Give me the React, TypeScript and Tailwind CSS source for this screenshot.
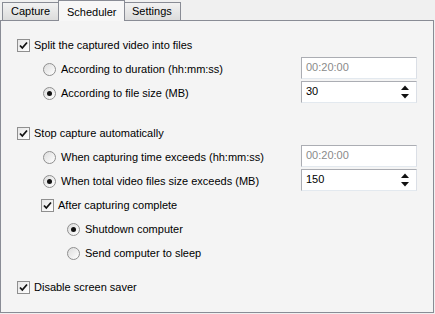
import type { ReactNode } from "react";

const font = { fontFamily: '"Liberation Sans", Arial, sans-serif' };

function CheckBox({ checked }: { checked: boolean }) {
  return (
    <span className="flex h-[13px] w-[13px] shrink-0 items-center justify-center border border-[#8f8f8f] bg-gradient-to-br from-[#e6e6e6] to-white">
      {checked && (
        <svg width="9" height="9" viewBox="0 0 9 9">
          <path d="M1 4.5 L3.3 7 L8 1.5" fill="none" stroke="#111" strokeWidth="1.8" />
        </svg>
      )}
    </span>
  );
}

function Radio({ checked }: { checked: boolean }) {
  return (
    <span className="flex h-[13px] w-[13px] shrink-0 items-center justify-center rounded-full border border-[#8f8f8f] bg-gradient-to-br from-[#dcdcdc] to-white">
      {checked && <span className="h-[5px] w-[5px] rounded-full bg-[#111]" />}
    </span>
  );
}

function Row({
  indent,
  gap,
  control,
  children,
  right,
}: {
  indent: string;
  gap: string;
  control: ReactNode;
  children: ReactNode;
  right?: ReactNode;
}) {
  return (
    <div className={`flex h-[24px] items-center ${indent}`}>
      <div className={`flex items-center ${gap}`}>
        {control}
        <span className="text-[11px] text-black">{children}</span>
      </div>
      {right && <div className="ml-auto mr-[16px] mb-[3px]">{right}</div>}
    </div>
  );
}

function TimeBox({ value }: { value: string }) {
  return (
    <div className="flex h-[22px] w-[116px] items-center border border-[#abadb3] border-b-[#e3e9ef] border-r-[#dbdfe6] bg-white pl-[4px] text-[11px] text-[#8a8a8a]">
      {value}
    </div>
  );
}

function SpinBox({ value }: { value: string }) {
  return (
    <div className="flex h-[22px] w-[116px] items-center border border-[#abadb3] border-b-[#e3e9ef] border-r-[#dbdfe6] bg-white pl-[4px] text-[11px] text-black">
      <span>{value}</span>
      <div className="ml-auto mr-[7px] flex flex-col items-center gap-[4px]">
        <svg width="8" height="5" viewBox="0 0 8 5">
          <path d="M0 5 L4 0.5 L8 5 Z" fill="#111" />
        </svg>
        <svg width="8" height="5" viewBox="0 0 8 5">
          <path d="M0 0 L8 0 L4 4.5 Z" fill="#111" />
        </svg>
      </div>
    </div>
  );
}

function Tab({ label, active }: { label: string; active?: boolean }) {
  if (active) {
    return (
      <div className="relative z-10 -mb-px -mx-[2px] flex h-[21px] w-[67px] items-start border border-b-0 border-[#898c95] bg-[#f7f7f7] pl-[8px] pt-[3px] text-[11px] text-black">
        {label}
      </div>
    );
  }
  return (
    <div className="flex h-[18px] w-[58px] items-center border border-b-0 border-[#898c95] bg-gradient-to-b from-[#f2f2f2] to-[#dcdcdc] pl-[8px] text-[11px] text-black">
      {label}
    </div>
  );
}

export default function App() {
  return (
    <div className="flex h-[314px] w-[435px] flex-col bg-[#f0f0f0]" style={font}>
      <div className="flex h-[20px] items-end pl-[2px]">
        <Tab label="Capture" />
        <Tab label="Scheduler" active />
        <Tab label="Settings" />
      </div>
      <div className="mb-[1px] mr-[1px] flex flex-1 flex-col border border-[#898c95] bg-[#f4f4f4] pt-[12px]">
        <Row indent="pl-[16px]" gap="gap-[4px]" control={<CheckBox checked />}>
          Split the captured video into files
        </Row>
        <Row
          indent="pl-[42px]"
          gap="gap-[5px]"
          control={<Radio checked={false} />}
          right={<TimeBox value="00:20:00" />}
        >
          According to duration (hh:mm:ss)
        </Row>
        <Row
          indent="pl-[42px]"
          gap="gap-[5px]"
          control={<Radio checked />}
          right={<SpinBox value="30" />}
        >
          According to file size (MB)
        </Row>

        <div className="h-[16px]" />

        <Row indent="pl-[16px]" gap="gap-[4px]" control={<CheckBox checked />}>
          Stop capture automatically
        </Row>
        <Row
          indent="pl-[42px]"
          gap="gap-[5px]"
          control={<Radio checked={false} />}
          right={<TimeBox value="00:20:00" />}
        >
          When capturing time exceeds (hh:mm:ss)
        </Row>
        <Row
          indent="pl-[42px]"
          gap="gap-[5px]"
          control={<Radio checked />}
          right={<SpinBox value="150" />}
        >
          When total video files size exceeds (MB)
        </Row>
        <Row indent="pl-[40px]" gap="gap-[4px]" control={<CheckBox checked />}>
          After capturing complete
        </Row>
        <Row indent="pl-[66px]" gap="gap-[5px]" control={<Radio checked />}>
          Shutdown computer
        </Row>
        <Row indent="pl-[66px]" gap="gap-[5px]" control={<Radio checked={false} />}>
          Send computer to sleep
        </Row>

        <div className="h-[10px]" />

        <Row indent="pl-[16px]" gap="gap-[4px]" control={<CheckBox checked />}>
          Disable screen saver
        </Row>
      </div>
    </div>
  );
}
